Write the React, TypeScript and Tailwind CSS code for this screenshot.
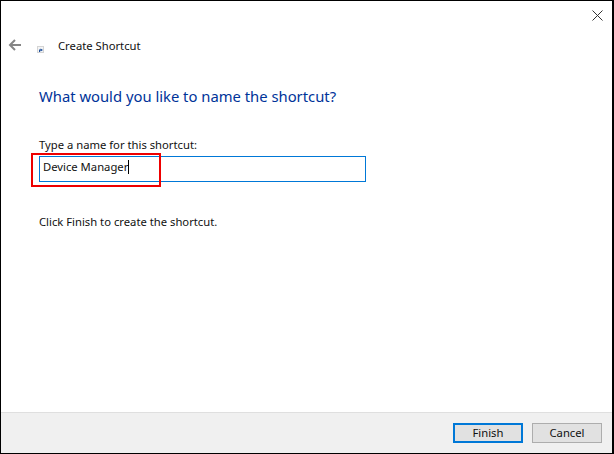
const FONT = "font-['Noto_Sans',sans-serif]";

function BackArrow() {
  return (
    <svg width="14" height="12" viewBox="0 0 14 12" fill="none" stroke="#858585" strokeWidth="2">
      <path d="M13 6H2" />
      <path d="M7 1L2 6l5 5" />
    </svg>
  );
}

function ShortcutIcon() {
  return (
    <svg width="7" height="7" viewBox="0 0 7 7">
      <rect width="7" height="7" fill="#d4d4d4" />
      <rect x="1" y="1" width="5" height="5" fill="#f4f4f4" />
      <path d="M2 6V3.5h1.5V2.5L6 4 3.5 5.5V4.5H3V6z" fill="#1d4f9c" />
    </svg>
  );
}

export default function App() {
  return (
    <div className={`${FONT} flex h-[454px] w-[614px] flex-col overflow-hidden border-y border-r-2 border-l border-black bg-white text-[11.25px] text-[#111]`}>
      <div className="flex h-[29px] shrink-0 items-center justify-end pr-[9px]">
        <svg width="11" height="11" viewBox="0 0 11 11" fill="none" stroke="#333" strokeWidth="1">
          <path d="M0.5 0.5l10 10M10.5 0.5l-10 10" />
        </svg>
      </div>

      <div className="flex h-[30px] shrink-0 items-center">
        <div className="ml-[7px] mb-[1px] flex w-[29px] shrink-0">
          <BackArrow />
        </div>
        <div className="mt-[8px] flex w-[21px] shrink-0">
          <ShortcutIcon />
        </div>
        <span className="mt-[2px] leading-4">Create Shortcut</span>
      </div>

      <h1 className="ml-[38px] mt-[25px] text-[14.8px] font-normal leading-[22px] text-[#003399]">
        What would you like to name the shortcut?
      </h1>

      <label htmlFor="name" className="ml-[38px] mt-[30px] block leading-4">
        Type a name for this shortcut:
      </label>

      <div className="relative ml-[38px] mt-[3px] w-[327px]">
        <div className="flex h-[26px] items-center border border-[#0078d7] pb-[4px] pl-[3px]">
          <span className="leading-4">Device Manager</span>
          <span className="h-[14px] w-px bg-black" />
        </div>
        <div className="absolute -top-[3px] -left-[8px] h-[34px] w-[130px] border-2 border-[#ee0000]" />
      </div>

      <p className="ml-[38px] mt-[32px] leading-4">Click Finish to create the shortcut.</p>

      <div className="mt-auto flex h-[41px] shrink-0 items-center justify-end gap-[9px] border-t border-[#dfdfdf] bg-[#f0f0f0] pr-[10px]">
        <button className="h-[20px] w-[70px] border-2 border-[#0078d7] bg-[#e1e1e1] leading-none">Finish</button>
        <button className="h-[20px] w-[70px] border border-[#adadad] bg-[#e1e1e1] leading-none">Cancel</button>
      </div>
    </div>
  );
}
